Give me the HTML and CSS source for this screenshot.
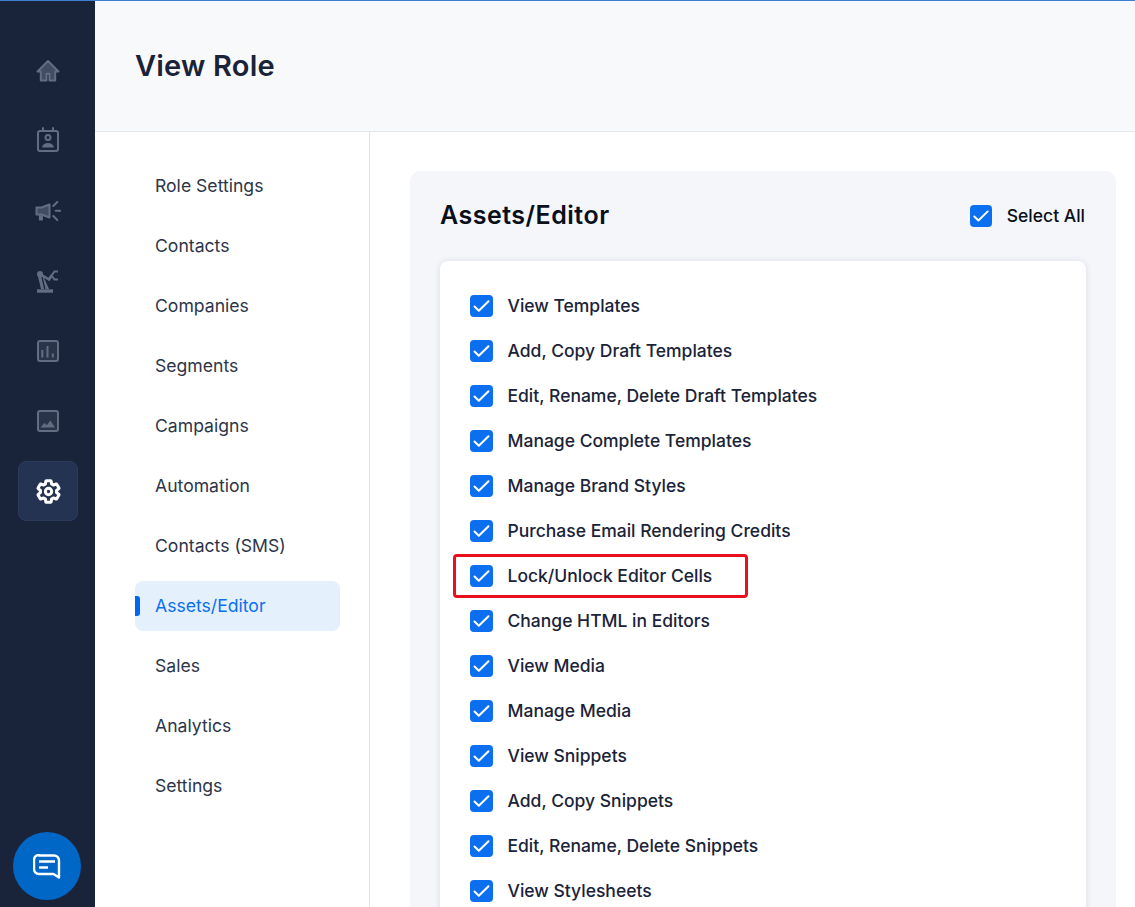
FILE: index.html
```html
<!DOCTYPE html>
<html lang="en">
<head>
<meta charset="utf-8">
<title>View Role</title>
<link rel="stylesheet" href="styles.css">
</head>
<body>
<svg class="defs" width="0" height="0" aria-hidden="true">
  <symbol id="check" viewBox="0 0 23 22"><path d="M4.500 11.500l4.300 4.200L18.500 6.200" fill="none" stroke="#fff" stroke-width="2" stroke-linecap="round" stroke-linejoin="round"/></symbol>
</svg>
<div class="app">
  <aside class="rail">
    <nav class="rail-icons">
      <a class="rail-item"><svg viewBox="0 0 24 24" width="24" height="24"><path d="M12 2 1.500 12.500h3.300v9h5.700v-6.800h3v6.800h5.700v-9h3.300z" fill="#414c63" stroke="#626d82" stroke-width="2" stroke-linejoin="round"/></svg></a>
      <a class="rail-item"><svg viewBox="0 0 24 29" width="24" height="29" fill="none" stroke="#626d82" stroke-width="2"><rect x="2" y="4" width="20" height="20" rx="2"/><path d="M7 1V4M17 1V4" stroke-linecap="round"/><circle cx="12" cy="10.500" r="2.500"/><path d="M6 20.500c.4-3 3-4.500 6-4.500s5.600 1.500 6 4.500z" fill="#626d82" stroke="none"/></svg></a>
      <a class="rail-item"><svg viewBox="0 0 26 22" width="26" height="22" fill="none" stroke="#626d82" stroke-width="2"><path d="M1.500 7.500h5l8-3v13l-8-3h-5z" fill="#414c63" stroke-linejoin="round"/><path d="M4.500 15v5h2.800v-4.500" fill="#626d82" stroke-width="1.200"/><path d="M18.300 6l4-4M20.700 10.700h4.600M18.300 16l4 4" stroke-linecap="round"/></svg></a>
      <a class="rail-item"><svg viewBox="0 0 24 26" width="24" height="26" fill="none" stroke="#626d82" stroke-width="2"><path d="M1 23h16" stroke-width="3.400"/><path d="M1.500 6.500h5L13 21H5z" fill="#626d82" stroke="none"/><path d="M6 9l2.800 12" stroke="#19243b" stroke-width="1.300"/><circle cx="4" cy="6" r="3" fill="#626d82" stroke="none"/><path d="M4 6l9 5.500L15.500 7.500" stroke-width="2.600"/><path d="M22 3.500h-3.500l-3 4 3 4H22"/></svg></a>
      <a class="rail-item"><svg viewBox="0 0 24 24" width="24" height="24" fill="none" stroke="#626d82" stroke-width="2"><rect x="2" y="2" width="20" height="20" rx="2" fill="#2a3449"/><path d="M6.300 18.500v-7.500M11.500 18.500V7M16.800 18.500v-4"/></svg></a>
      <a class="rail-item"><svg viewBox="0 0 24 24" width="24" height="24" fill="none" stroke="#626d82" stroke-width="2"><rect x="2" y="2" width="20" height="20" rx="2" fill="#2a3449"/><path d="M4.500 18.500 8.500 14l2.300 2.300 3.500-4.800 4.700 7z" fill="#626d82" stroke="none"/></svg></a>
      <a class="rail-item rail-item-active"><svg viewBox="0 0 24 24" width="27" height="27" fill="none" stroke="#fff" stroke-width="2.700" stroke-linejoin="round"><path d="M19.140 12.940c.04-.3.06-.61.06-.94 0-.32-.02-.64-.07-.94l2.030-1.580c.18-.14.23-.41.12-.61l-1.920-3.320c-.12-.22-.37-.29-.59-.22l-2.390.96c-.5-.38-1.030-.7-1.620-.94l-.36-2.540c-.04-.24-.24-.41-.48-.41h-3.840c-.24 0-.43.17-.47.41l-.36 2.540c-.59.24-1.130.57-1.620.94l-2.390-.96c-.22-.08-.47 0-.59.22L2.740 8.870c-.12.21-.08.47.12.61l2.030 1.580c-.05.3-.09.63-.09.94s.02.64.07.94l-2.030 1.580c-.18.14-.23.41-.12.61l1.920 3.320c.12.22.37.29.59.22l2.390-.96c.5.38 1.030.7 1.620.94l.36 2.540c.05.24.24.41.48.41h3.840c.24 0 .44-.17.47-.41l.36-2.540c.59-.24 1.130-.56 1.620-.94l2.390.96c.22.08.47 0 .59-.22l1.920-3.320c.12-.22.07-.47-.12-.61l-2.010-1.580z"/><circle cx="12" cy="12" r="2.800"/></svg></a>
    </nav>
    <button class="chat" type="button" aria-label="Chat"><svg viewBox="0 0 28 25" width="28" height="25" fill="none" stroke="#fff"><path d="M6 1.500h15a5 5 0 0 1 5 5v17l-5.500-3.500H6a5 5 0 0 1-5-5v-9a5 5 0 0 1 5-5z" stroke-width="2.400" stroke-linejoin="round"/><path d="M6 7.500h16M6 13.500h9" stroke-width="2.500"/></svg></button>
  </aside>
  <main class="main">
    <header class="page-head"><h1>View Role</h1></header>
    <div class="content">
      <nav class="side">
        <a class="side-item">Role Settings</a>
        <a class="side-item">Contacts</a>
        <a class="side-item">Companies</a>
        <a class="side-item">Segments</a>
        <a class="side-item">Campaigns</a>
        <a class="side-item">Automation</a>
        <a class="side-item">Contacts (SMS)</a>
        <a class="side-item side-item-active">Assets/Editor</a>
        <a class="side-item">Sales</a>
        <a class="side-item">Analytics</a>
        <a class="side-item">Settings</a>
      </nav>
      <section class="panel-wrap">
        <div class="panel">
          <div class="panel-head">
            <h2>Assets/Editor</h2>
            <label class="check select-all"><span class="box"><svg width="22" height="22"><use href="#check"/></svg></span><span class="select-label">Select All</span></label>
          </div>
          <div class="card">
            <label class="check"><span class="box"><svg width="23" height="22"><use href="#check"/></svg></span>View Templates</label>
            <label class="check"><span class="box"><svg width="23" height="22"><use href="#check"/></svg></span>Add, Copy Draft Templates</label>
            <label class="check"><span class="box"><svg width="23" height="22"><use href="#check"/></svg></span>Edit, Rename, Delete Draft Templates</label>
            <label class="check"><span class="box"><svg width="23" height="22"><use href="#check"/></svg></span>Manage Complete Templates</label>
            <label class="check"><span class="box"><svg width="23" height="22"><use href="#check"/></svg></span>Manage Brand Styles</label>
            <label class="check"><span class="box"><svg width="23" height="22"><use href="#check"/></svg></span>Purchase Email Rendering Credits</label>
            <label class="check check-marked"><span class="box"><svg width="23" height="22"><use href="#check"/></svg></span>Lock/Unlock Editor Cells</label>
            <label class="check"><span class="box"><svg width="23" height="22"><use href="#check"/></svg></span>Change HTML in Editors</label>
            <label class="check"><span class="box"><svg width="23" height="22"><use href="#check"/></svg></span>View Media</label>
            <label class="check"><span class="box"><svg width="23" height="22"><use href="#check"/></svg></span>Manage Media</label>
            <label class="check"><span class="box"><svg width="23" height="22"><use href="#check"/></svg></span>View Snippets</label>
            <label class="check"><span class="box"><svg width="23" height="22"><use href="#check"/></svg></span>Add, Copy Snippets</label>
            <label class="check"><span class="box"><svg width="23" height="22"><use href="#check"/></svg></span>Edit, Rename, Delete Snippets</label>
            <label class="check"><span class="box"><svg width="23" height="22"><use href="#check"/></svg></span>View Stylesheets</label>
          </div>
        </div>
      </section>
    </div>
  </main>
</div>
</body>
</html>
```
FILE: styles.css
```css
*, *::before, *::after { box-sizing: border-box; }
html, body { margin: 0; height: 100%; overflow: hidden; }
body { font-family: Inter, "Liberation Sans", sans-serif; color: #1a2338; background: #fff; }
.defs { position: absolute; }
.app { display: flex; height: 907px; overflow: hidden; border-top: 1px solid #3f7fd0; }
.rail { width: 95px; flex: none; background: #19243b; display: flex; flex-direction: column; align-items: center; justify-content: space-between; padding: 40px 0 7px 1px; }
.rail-icons { display: flex; flex-direction: column; gap: 10px; }
.rail-item { width: 60px; height: 60px; display: flex; align-items: center; justify-content: center; border-radius: 8px; }
.rail-item-active { background: #253353; border: 1px solid #2c3b5c; }
.chat { width: 68px; height: 68px; margin-left: -3px; border: 0; border-radius: 50%; background: #0067c7; display: flex; align-items: center; justify-content: center; padding: 0; }
.main { flex: 1; min-width: 0; }
.page-head { height: 131px; background: #f8f9fb; border-bottom: 1px solid #e3e6eb; display: flex; align-items: center; padding: 0 40px; }
h1 { margin: 0; font-size: 29px; line-height: 36px; font-weight: 600; letter-spacing: .2px; color: #1a2338; }
.content { display: flex; }
.side { width: 275px; flex: none; border-right: 1px solid #dfe3e9; padding: 29px 29px 200px 40px; }
.side-item { display: flex; align-items: center; height: 50px; margin-bottom: 10px; padding: 0 0 2px 20px; font-size: 17.6px; color: #2c3548; border-radius: 8px; position: relative; }
.side-item-active { background: #e4f0fc; color: #0b6ff0; }
.side-item-active::before { content: ""; position: absolute; left: 0; top: 15px; width: 5px; height: 20px; background: #0068f0; border-radius: 0 3px 3px 0; }
.panel-wrap { flex: 1; padding: 39px 19px 0 40px; }
.panel { background: #f4f6fa; border-radius: 10px; padding: 0 30px; height: 800px; }
.panel-head { height: 90px; display: flex; align-items: center; justify-content: space-between; padding-right: 1px; }
h2 { margin: 0 0 2px; font-size: 25px; line-height: 30px; font-weight: 600; letter-spacing: .5px; color: #0a0f1a; }
.card { background: #fff; border-radius: 8px; box-shadow: 0 0 6px rgba(30, 40, 70, .12); padding: 22px 30px; }
.check { display: flex; align-items: center; height: 45px; font-size: 17.5px; font-weight: 500; color: #1a2338; position: relative; }
.select-all { height: 22px; color: #0a0f1a; }
.select-label { margin-bottom: 2px; }
.box { width: 23px; height: 22px; flex: none; margin-right: 14.500px; background: #0b6ff0; border-radius: 4px; display: flex; align-items: center; justify-content: center; }
.select-all .box { width: 22px; margin-right: 15px; }
.box svg { display: block; }
.check-marked::after { content: ""; position: absolute; left: -17px; top: 1px; width: 295px; height: 44px; border: 3px solid #e8101c; border-radius: 4px; }
```
